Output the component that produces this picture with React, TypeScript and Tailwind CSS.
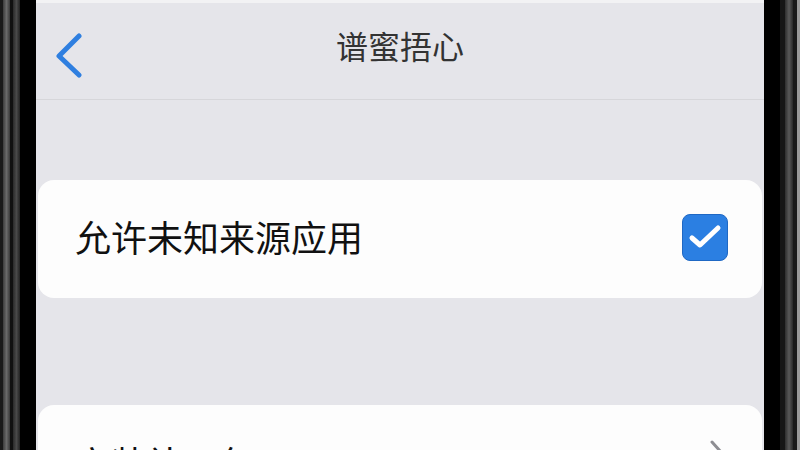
import React from 'react';

const font = { fontFamily: '"Noto Sans CJK SC", "Noto Sans", sans-serif' };

const BackIcon = () => (
    <svg width="30" height="46" viewBox="0 0 30 46" fill="none">
        <path d="M24 3 L4 23 L24 42" stroke="#2f7fe0" strokeWidth="5" strokeLinecap="round" strokeLinejoin="round" />
    </svg>
);

const CheckBox = () => (
    <div className="w-[46px] h-[47px] rounded-[8px] bg-[#2b7fe2] border border-[#1f68c4] flex items-center justify-center">
        <svg width="34" height="28" viewBox="0 0 34 28" fill="none">
            <path d="M4 15 L12 22 L30 5" stroke="#ffffff" strokeWidth="5" strokeLinecap="round" strokeLinejoin="round" />
        </svg>
    </div>
);

const Chevron = () => (
    <svg width="14" height="24" viewBox="0 0 14 24" fill="none">
        <path d="M2 2 L11 12 L2 22" stroke="#8e8e93" strokeWidth="3" strokeLinecap="round" strokeLinejoin="round" />
    </svg>
);

const LeftBezel = () => (
    <div className="w-[36px] h-full flex shrink-0">
        <div className="w-[3px] bg-[#1a1a1a]" />
        <div className="w-[7px] bg-gradient-to-r from-[#3c3c3c] via-[#6a6a6a] to-[#3a3a3a]" />
        <div className="w-[3px] bg-[#111]" />
        <div className="w-[7px] bg-gradient-to-r from-[#2a2a2a] via-[#4a4a4a] to-[#222]" />
        <div className="flex-1 bg-black" />
    </div>
);

const RightBezel = () => (
    <div className="w-[36px] h-full flex shrink-0">
        <div className="w-[16px] bg-black" />
        <div className="w-[5px] bg-[#161616]" />
        <div className="w-[8px] bg-gradient-to-r from-[#2e2e2e] via-[#5a5a5a] to-[#2a2a2a]" />
        <div className="w-[4px] bg-[#1a1a1a]" />
        <div className="flex-1 bg-[#9a9a9a]" />
    </div>
);

export default function App() {
    return (
        <div className="w-[800px] h-[450px] overflow-hidden flex bg-black" style={font}>
            <LeftBezel />
            <div className="flex-1 h-full bg-[#e5e5ea] flex flex-col overflow-hidden">
                <div className="h-[3px] bg-[#f2f2f4] shrink-0" />
                {/* nav bar */}
                <div className="relative h-[97px] shrink-0 flex items-start border-b border-[#d6d6da]">
                    <div className="pl-[19px] pt-[30px]">
                        <BackIcon />
                    </div>
                    <div className="absolute inset-x-0 top-[22px] text-center text-[32px] leading-[40px] text-[#333333]">
                        谱蜜捂心
                    </div>
                </div>

                <div className="h-[80px] shrink-0" />

                {/* unknown sources toggle */}
                <div className="mx-[2px] h-[118px] shrink-0 bg-[#fdfdfd] rounded-[16px] flex items-center justify-between pl-[37px] pr-[34px]">
                    <span className="text-[36px] leading-[44px] text-[#111111] pb-[6px]">允许未知来源应用</span>
                    <div className="pb-[4px]">
                        <CheckBox />
                    </div>
                </div>

                <div className="h-[107px] shrink-0" />

                <div className="mx-[2px] h-[120px] shrink-0 bg-[#fdfdfd] rounded-[16px] flex items-start justify-between pl-[37px] pr-[38px] pt-[35px]">
                    <span className="text-[36px] leading-[44px] text-[#111111]">安装补丁包</span>
                    <div className="pt-[0px]">
                        <Chevron />
                    </div>
                </div>
            </div>
            <RightBezel />
        </div>
    );
}
